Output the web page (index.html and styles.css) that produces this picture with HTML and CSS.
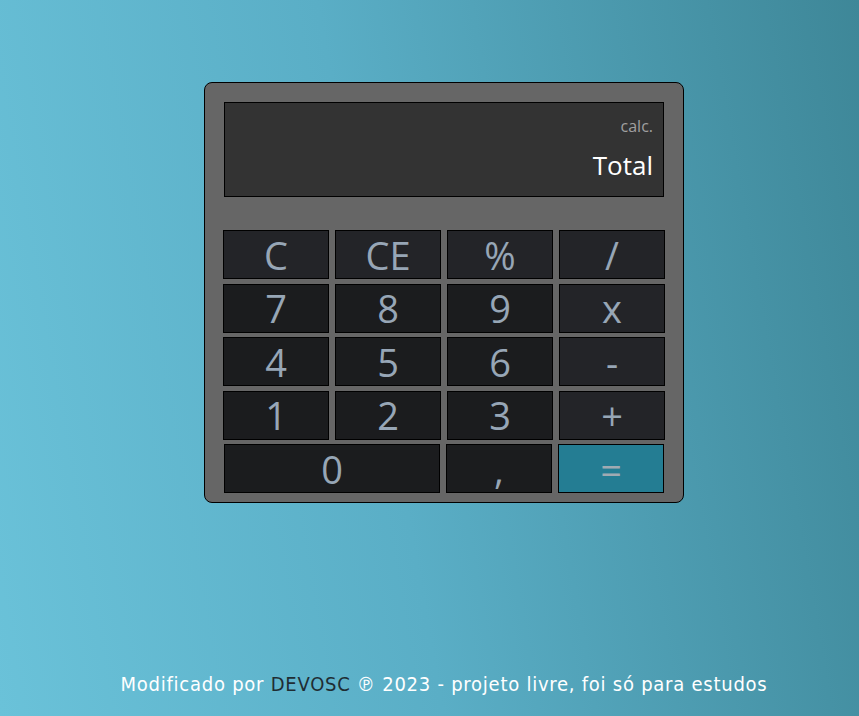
FILE: index.html
```html
<!DOCTYPE html>
<html lang="pt-BR">
<head>
<meta charset="utf-8">
<title>Calculadora</title>
<link rel="stylesheet" href="styles.css">
</head>
<body>
<main class="page">
  <div class="calc">
    <div class="display">
      <div class="calc-line">calc.</div>
      <div class="total">Total</div>
    </div>
    <div class="keys">
      <button class="key op">C</button>
      <button class="key op">CE</button>
      <button class="key op">%</button>
      <button class="key op">/</button>
      <button class="key">7</button>
      <button class="key">8</button>
      <button class="key">9</button>
      <button class="key op">x</button>
      <button class="key">4</button>
      <button class="key">5</button>
      <button class="key">6</button>
      <button class="key op">-</button>
      <button class="key">1</button>
      <button class="key">2</button>
      <button class="key">3</button>
      <button class="key op">+</button>
      <button class="key zero">0</button>
      <button class="key comma">,</button>
      <button class="key equals">=</button>
    </div>
  </div>
  <footer class="footer">Modificado por <span class="brand">DEVOSC</span> ℗ 2023 - projeto livre, foi só para estudos</footer>
</main>
</body>
</html>
```
FILE: styles.css
```css
html, body {
  margin: 0;
  height: 100%;
}
body {
  background: linear-gradient(80deg, #6ac2d9 0%, #5aaec6 45%, #3e8798 100%);
  font-family: "Open Sans", "DejaVu Sans", sans-serif;
  overflow: hidden;
}
.page {
  height: 716px;
  box-sizing: border-box;
  padding: 82px 0 0 29px;
  display: flex;
  flex-direction: column;
  align-items: center;
}
.calc {
  width: 480px;
  box-sizing: border-box;
  background: #666666;
  border: 1px solid #000;
  border-radius: 8px;
  padding: 19px 19px 9px;
}
.display {
  height: 95px;
  box-sizing: border-box;
  background: #333333;
  border: 1px solid #000;
  padding: 12px 10px 0 0;
  text-align: right;
}
.calc-line {
  color: #a0a0a0;
  font-size: 16px;
  line-height: 22px;
}
.total {
  color: #ffffff;
  font-size: 26px;
  line-height: 34px;
  margin-top: 11px;
}
.keys {
  margin: 33px 0 0 -1px;
  width: 442px;
  display: grid;
  grid-template-columns: repeat(4, 106px);
  grid-auto-rows: 49px;
  column-gap: 6px;
  row-gap: 4.5px;
}
.key {
  margin: 0;
  padding: 0;
  border: 1px solid #000;
  background: #1b1c1e;
  color: #97a6b6;
  font-family: "Open Sans", "DejaVu Sans", sans-serif;
  font-size: 38px;
  line-height: 1;
}
.key.op {
  background: #232428;
}
.zero {
  grid-column: span 2;
  margin: 0 1px;
}
.comma, .equals {
  position: relative;
  left: -1px;
}
.equals {
  background: #247d93;
  color: #a0aab2;
}
.footer {
  margin-top: auto;
  margin-bottom: 20px;
  color: #ffffff;
  font-family: "DejaVu Sans Condensed", "DejaVu Sans", sans-serif;
  font-size: 20px;
  letter-spacing: 0.75px;
}
.brand {
  color: #1f2d33;
}
```
